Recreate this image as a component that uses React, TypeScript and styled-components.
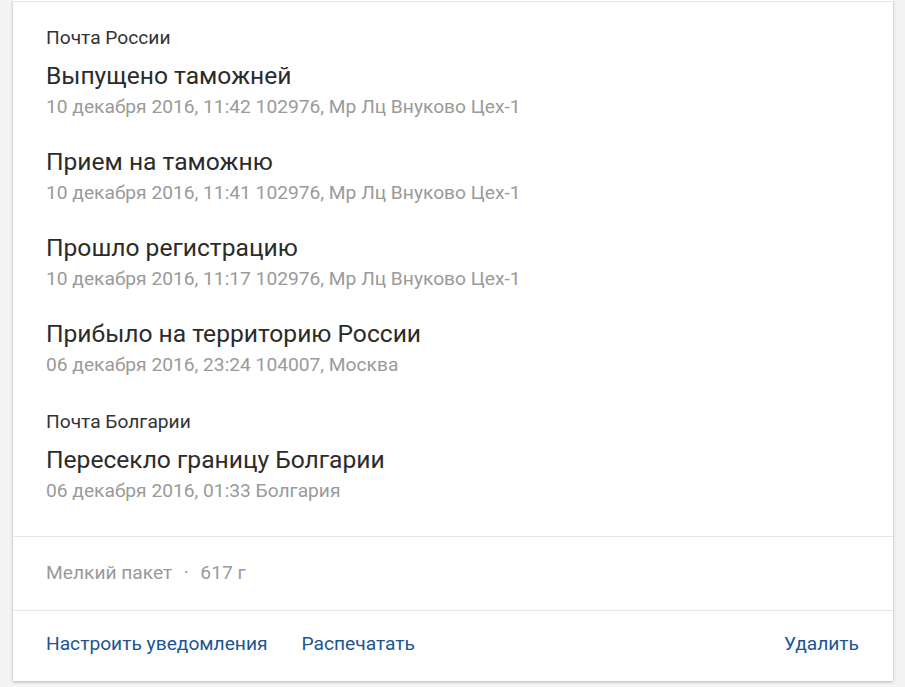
import React from "react";
import styled, { createGlobalStyle } from "styled-components";

const Global = createGlobalStyle`
  html, body { margin: 0; padding: 0; background: #f4f4f4; }
  body { font-family: Roboto, "Noto Sans", Arial, sans-serif; -webkit-font-smoothing: antialiased; }
`;

const Page = styled.div`
  padding: 0 12px 6px 13px;
`;

const Card = styled.div`
  background: #fff;
  box-shadow: 0 1px 3px rgba(0, 0, 0, 0.28);
  padding-top: 1px;
`;

const Section = styled.div<{ $pad: string }>`
  border-top: 1px solid #e6e6e6;
  padding: ${(p) => p.$pad};
`;

const Group = styled.div`
  margin-bottom: 30px;
  &:last-child { margin-bottom: 0; }
`;

const Carrier = styled.div`
  font-size: 19.2px;
  line-height: 24px;
  color: #333;
  margin-bottom: 10px;
`;

const Event = styled.div`
  margin-bottom: 24px;
  &:last-child { margin-bottom: 0; }
`;

const Title = styled.div`
  font-size: 24.6px;
  line-height: 32px;
  color: #2b2b2b;
`;

const Meta = styled.div`
  font-size: 19.2px;
  line-height: 30px;
  color: #9a9a9a;
`;

const Info = styled.div`
  font-size: 19.2px;
  line-height: 24px;
  color: #9a9a9a;
`;

const Dot = styled.span`
  margin: 0 11.5px;
`;

const Actions = styled.div`
  display: flex;
  align-items: center;
  gap: 34px;
`;

const Link = styled.a<{ $right?: boolean }>`
  font-size: 19.2px;
  line-height: 24px;
  color: #1d5593;
  text-decoration: none;
  cursor: pointer;
  ${(p) => (p.$right ? "margin-left: auto;" : "")}
`;

const groups = [
  {
    carrier: "Почта России",
    events: [
      ["Выпущено таможней", "10 декабря 2016, 11:42 102976, Мр Лц Внуково Цех-1"],
      ["Прием на таможню", "10 декабря 2016, 11:41 102976, Мр Лц Внуково Цех-1"],
      ["Прошло регистрацию", "10 декабря 2016, 11:17 102976, Мр Лц Внуково Цех-1"],
      ["Прибыло на территорию России", "06 декабря 2016, 23:24 104007, Москва"],
    ],
  },
  {
    carrier: "Почта Болгарии",
    events: [["Пересекло границу Болгарии", "06 декабря 2016, 01:33 Болгария"]],
  },
];

export default function App() {
  return (
    <>
      <Global />
      <Page>
        <Card>
          <Section $pad="24px 33px 30px">
            {groups.map((g) => (
              <Group key={g.carrier}>
                <Carrier>{g.carrier}</Carrier>
                {g.events.map(([t, m]) => (
                  <Event key={t}>
                    <Title>{t}</Title>
                    <Meta>{m}</Meta>
                  </Event>
                ))}
              </Group>
            ))}
          </Section>
          <Section $pad="24px 33px 25px">
            <Info>
              Мелкий пакет<Dot>·</Dot>617 г
            </Info>
          </Section>
          <Section $pad="21px 34px 25px 33px">
            <Actions>
              <Link>Настроить уведомления</Link>
              <Link>Распечатать</Link>
              <Link $right>Удалить</Link>
            </Actions>
          </Section>
        </Card>
      </Page>
    </>
  );
}
